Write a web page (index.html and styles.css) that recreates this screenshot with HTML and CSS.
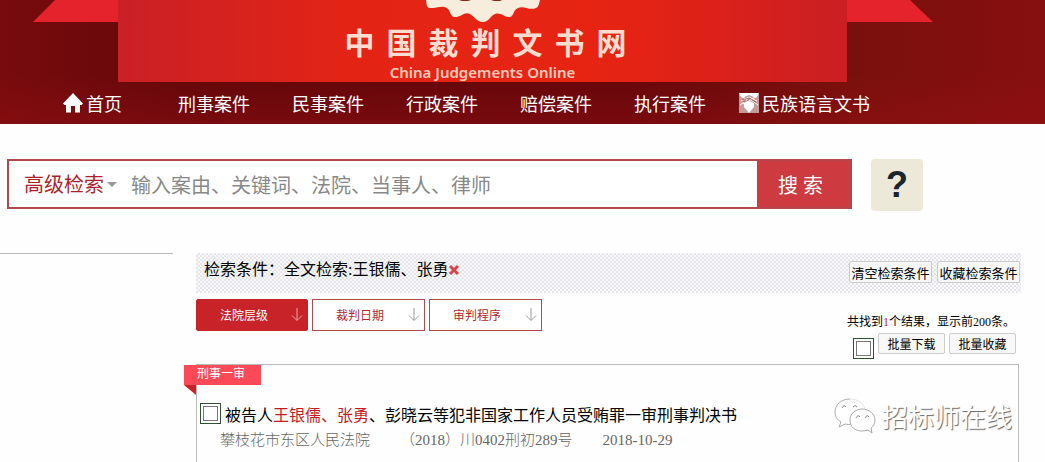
FILE: index.html
```html
<!DOCTYPE html>
<html lang="zh-CN">
<head>
    <meta charset="UTF-8">
    <meta name="viewport" content="width=device-width, initial-scale=1.0">
    <title>中国裁判文书网</title>
    <link rel="stylesheet" href="styles.css">
</head>
<body>

<header class="header">
    <div class="banner">
        <svg class="ribbon" width="85" height="22" viewBox="0 0 85 22" aria-hidden="true">
            <path d="M22 0H85V22H0Z" fill="#e5232c"/>
        </svg>
        <div class="banner-main">
            <svg class="emblem" width="116" height="23" viewBox="0 0 116 23" aria-hidden="true">
                <path d="M1 0C2 4 1 8 5 8C12 8 17 5 22 8C26 11 25 17 30 17C36 17 40 11 45 14C50 17 52 22 58 22C64 22 65 16 70 14C76 12 80 18 85 17C89 16 88 10 93 8C99 5 104 11 111 8C114 7 114 3 115 0Z" fill="#f6eddc"/>
                <path d="M34 0H46L43 1H37ZM66 0H77L75 1H69Z" fill="#8c2a1e"/>
            </svg>
            <h1 class="site-name"><span>中</span><span>国</span><span>裁</span><span>判</span><span>文</span><span>书</span><span>网</span></h1>
            <p class="site-name-en">China Judgements Online</p>
        </div>
        <svg class="ribbon" width="86" height="22" viewBox="0 0 86 22" aria-hidden="true">
            <path d="M0 0H63L86 22H0Z" fill="#e5232c"/>
        </svg>
    </div>
    <nav class="nav">
        <a class="nav-home" href="#">
            <svg width="20" height="20" viewBox="0 0 20 20" aria-hidden="true">
                <path d="M10 0L20 10.5L18.5 12H17V19.5H12V13H8V19.5H3V12H1.500L0 10.500Z" fill="#fff"/>
            </svg>
            首页
        </a>
        <a href="#">刑事案件</a>
        <a href="#">民事案件</a>
        <a href="#">行政案件</a>
        <a href="#">赔偿案件</a>
        <a href="#">执行案件</a>
        <a class="nav-lang" href="#">
            <svg width="20" height="20" viewBox="0 0 20 20" aria-hidden="true">
                <path d="M0 0H20V20H0Z" fill="#c69a97"/>
                <path d="M0 0H20L17 5L10 2L3 5Z" fill="#fff"/>
                <path d="M5 11L8 8L12 9L15 11V14L10 20L5 14Z" fill="#fff"/>
                <path d="M1 2L7 6L15 11M19 2L13 6L4 11M2 8L10 4L18 8M1 12L8 7M19 12L12 7" fill="none" stroke="#fff"/>
                <path d="M3 7L10 5L17 9M4 9L10 7" fill="none" stroke="#8d4b49" stroke-width="0.700"/>
            </svg>
            民族语言文书
        </a>
    </nav>
</header>

<div class="search">
    <form class="search-form">
        <select class="search-type" aria-label="检索方式">
            <option>高级检索</option>
        </select>
        <span class="caret"></span>
        <input class="search-input" type="text" aria-label="检索内容" placeholder="输入案由、关键词、法院、当事人、律师">
        <button class="search-button" type="button">搜 索</button>
    </form>
    <button class="help" type="button">?</button>
</div>

<div class="content">
    <aside class="sidebar"></aside>
    <main class="main">
        <div class="conditions">
            <span>检索条件：全文检索:王银儒、张勇</span>
            <button class="remove" type="button" aria-label="删除">
                <svg width="12" height="12" viewBox="0 0 12 12" aria-hidden="true">
                    <path d="M2 2L10 10M10 2L2 10" stroke="#d9434b" stroke-width="3"/>
                </svg>
            </button>
            <div class="condition-actions">
                <button class="plain-button" type="button">清空检索条件</button>
                <button class="plain-button" type="button">收藏检索条件</button>
            </div>
        </div>

        <div class="toolbar">
            <div class="filters">
                <button class="filter active" type="button">
                    <span>法院层级</span>
                    <svg width="12" height="14" viewBox="0 0 12 14" aria-hidden="true"><path d="M6 0V12M1 7.500L6 12.500L11 7.500"/></svg>
                </button>
                <button class="filter" type="button">
                    <span>裁判日期</span>
                    <svg width="12" height="14" viewBox="0 0 12 14" aria-hidden="true"><path d="M6 0V12M1 7.500L6 12.500L11 7.500"/></svg>
                </button>
                <button class="filter" type="button">
                    <span>审判程序</span>
                    <svg width="12" height="14" viewBox="0 0 12 14" aria-hidden="true"><path d="M6 0V12M1 7.500L6 12.500L11 7.500"/></svg>
                </button>
            </div>
            <div class="summary">
                <p class="count">共找到<em>1</em>个结果，显示前200条。</p>
                <div class="batch">
                    <input class="check" type="checkbox" aria-label="全选">
                    <button class="batch-button" type="button">批量下载</button>
                    <button class="batch-button" type="button">批量收藏</button>
                </div>
            </div>
        </div>

        <article class="result">
            <span class="tag">刑事一审</span>
            <div class="result-title">
                <input class="check" type="checkbox" id="case1">
                <label for="case1">被告人<em>王银儒、张勇</em>、彭晓云等犯非国家工作人员受贿罪一审刑事判决书</label>
            </div>
            <div class="result-info">
                <span>攀枝花市东区人民法院</span>
                <span>（2018）川0402刑初289号</span>
                <span>2018-10-29</span>
            </div>
            <div class="watermark">
                <svg width="42" height="36" viewBox="0 0 42 36" aria-hidden="true">
                    <path d="M16 1C7 1 1 7 1 14C1 18 3 22 7 24L5 29L11 26Q15 27 18 26" fill="#fff" stroke="#aaa"/>
                    <path d="M16 1C24 1 29 5 31 11" fill="none" stroke="#e4e4e4"/>
                    <path d="M28 11C21 11 16 16 16 22C16 29 21 33 28 33Q31 33 34 32L38 35L37 30C40 28 41 25 41 22C41 16 35 11 28 11Z" fill="#fff" stroke="#aaa"/>
                    <path d="M8 10Q10 6 12 9M19 9Q21 6 23 9M22 20Q24 16 26 19M31 20Q33 16 35 19" fill="none" stroke="#888"/>
                </svg>
                <span>招标师在线</span>
            </div>
        </article>
    </main>
</div>

</body>
</html>
```

FILE: styles.css
```css
* {
    box-sizing: border-box;
}
body {
    margin: 0;
    background: #fefefe;
    color: #000;
    font-family: "Liberation Serif", "Noto Sans CJK SC", sans-serif;
    font-size: 16px;
}
button, input, select {
    font-family: inherit;
    margin: 0;
}
button {
    padding: 0;
    color: #000;
    cursor: pointer;
}
p, h1 {
    margin: 0;
}
em {
    color: #c6191e;
    font-style: normal;
}
svg {
    flex: none;
    display: block;
}

/* header */
.header {
    background: linear-gradient(180deg, rgba(150, 16, 20, 0) 60%, rgba(150, 16, 20, 0.4)), linear-gradient(90deg, #780b0d, #630709 18%, #65060a 60%, #7a100c 82%, #870f0f);
}
.banner {
    display: flex;
    padding: 0 112px 0 33px;
}
.banner-main {
    flex: 1;
    display: flex;
    flex-direction: column;
    align-items: center;
    height: 82px;
    background: linear-gradient(90deg, #c92026, #e32415 32%, #e72412 65%, #dd2118 80%, #c91f24);
}
.site-name {
    display: flex;
    gap: 12px;
    padding: 6px 0 2px 6px;
    color: #ffdcd0;
    font-family: "Liberation Sans", "Noto Sans CJK SC", sans-serif;
    font-size: 30px;
    line-height: 30px;
}
.site-name-en {
    color: #ffc9b8;
    font-family: "Noto Sans", sans-serif;
    font-size: 15px;
    font-weight: 600;
    line-height: 22px;
}
.nav {
    display: flex;
    height: 42px;
    padding-left: 63px;
}
.nav a {
    display: flex;
    align-items: center;
    gap: 3px;
    padding: 0 21px;
    color: #fff;
    font-size: 18px;
    text-decoration: none;
    white-space: nowrap;
}
.nav .nav-home {
    padding: 0 35px 0 0;
}
.nav .nav-lang {
    padding: 0 0 0 12px;
}

/* search */
.search {
    display: flex;
    gap: 19px;
    padding: 35px 122px 0 7px;
}
.search-form {
    flex: 1;
    display: flex;
    align-items: center;
    height: 50px;
    border: 2px solid #b5474c;
    background: #fff;
}
.search-type {
    appearance: none;
    width: 82px;
    margin-left: 15px;
    padding: 2px 0 0;
    border: none;
    background: none;
    color: #ad1f2c;
    font-size: 20px;
}
.caret {
    margin-left: 1px;
    border: 5px solid transparent;
    border-top-color: #999;
    border-bottom: none;
}
.search-input {
    flex: 1;
    min-width: 0;
    height: 46px;
    padding: 4px 14px 0;
    border: none;
    background: none;
    font-size: 20px;
}
.search-input::placeholder {
    color: #888;
}
.search-button {
    width: 93px;
    height: 46px;
    padding-right: 6px;
    border: none;
    background: #cd3a40;
    color: #fff;
    font-size: 20px;
}
.help {
    width: 52px;
    height: 52px;
    border: none;
    border-radius: 4px;
    background: #ece9d8;
    color: #1c242c;
    font-family: "Liberation Sans", sans-serif;
    font-size: 36px;
    font-weight: bold;
}

/* content */
.content {
    display: flex;
    gap: 23px;
    margin-top: 42px;
    padding-right: 24px;
}
.sidebar {
    width: 173px;
    border-top: 1px solid #bbb;
}
.main {
    flex: 1;
}
.conditions {
    display: flex;
    align-items: flex-start;
    height: 40px;
    padding: 8px 1px 0 8px;
    line-height: 18px;
    background: repeating-conic-gradient(#e6e6ea 0 25%, #f9f9fb 0 50%) 0 0 / 4px 4px;
}
.remove {
    padding-top: 3px;
    border: none;
    background: none;
}
.condition-actions {
    display: flex;
    gap: 5px;
    margin-left: auto;
}
.plain-button {
    width: 83px;
    height: 22px;
    border: 1px solid #ccc;
    border-radius: 2px;
    background: #f6f6f6;
    font-size: 13px;
    white-space: nowrap;
}
.toolbar {
    display: flex;
    justify-content: space-between;
    padding-top: 6px;
}
.filters {
    display: flex;
    align-items: flex-start;
    gap: 4px;
}
.filter {
    display: flex;
    align-items: center;
    justify-content: space-between;
    width: 113px;
    height: 32px;
    padding: 0 4px 0 23px;
    border: 1px solid #b8474b;
    background: #fff;
    color: #b3272d;
    font-size: 12px;
}
.filter svg {
    fill: none;
    stroke: #999;
}
.filter.active {
    width: 112px;
    border-color: #c9232a;
    border-radius: 2px;
    background: #c9232a;
    color: #fff;
}
.filter.active svg {
    stroke: #e9a5a5;
}
.count {
    padding-top: 14px;
    font-size: 12px;
    line-height: 18px;
}
.batch {
    display: flex;
    gap: 4px;
    padding: 2px 5px 5px 6px;
}
.batch-button {
    width: 67px;
    height: 21px;
    border: 1px solid #ccc;
    border-radius: 2px;
    background: #f8f8f8;
    font-size: 12px;
}
.check {
    appearance: none;
    display: grid;
    place-items: center;
    flex: none;
    width: 21px;
    height: 21px;
    border: 1px solid #2f5232;
    background: #fff;
}
.check::before {
    content: "";
    width: 13px;
    height: 13px;
    border: 1px solid #777;
}
.batch .check {
    margin-top: 5px;
}

/* result */
.result {
    position: relative;
    margin-right: 2px;
    padding: 38px 0 10px 3px;
    border: 1px solid #bbb;
    border-bottom: none;
}
.tag {
    position: absolute;
    top: 0;
    left: -13px;
    width: 77px;
    height: 20px;
    padding-left: 13px;
    background: #fb4a57;
    color: #fff;
    font-size: 12px;
    line-height: 19px;
}
.tag::after {
    content: "";
    position: absolute;
    top: 20px;
    left: 0;
    border-top: 10px solid #c9232a;
    border-left: 12px solid transparent;
}
.result-title {
    display: flex;
    align-items: center;
    gap: 4px;
    height: 21px;
}
.result-info {
    display: flex;
    gap: 30px;
    padding: 4px 0 0 20px;
    color: #666;
    font-size: 15px;
    font-weight: 300;
    line-height: 24px;
}
.watermark {
    position: absolute;
    top: 32px;
    right: 6px;
    display: flex;
    align-items: center;
    gap: 6px;
    color: #fff;
    font-size: 26px;
    text-shadow: 1px 1px 1px #666;
}
```
